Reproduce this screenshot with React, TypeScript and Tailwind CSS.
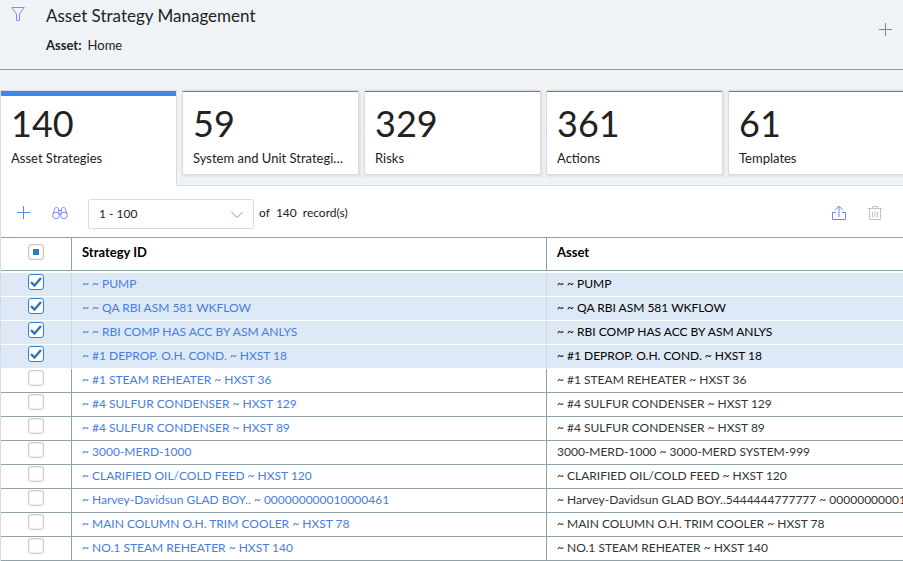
import { useState } from 'react';
import clsx from 'clsx';

type Row = { id: string; asset: string };

const tabs = [
  { count: 140, label: 'Asset Strategies' },
  { count: 59, label: 'System and Unit Strategies' },
  { count: 329, label: 'Risks' },
  { count: 361, label: 'Actions' },
  { count: 61, label: 'Templates' },
];

const rows: Row[] = [
  { id: '~ ~ PUMP', asset: '~ ~ PUMP' },
  { id: '~ ~ QA RBI ASM 581 WKFLOW', asset: '~ ~ QA RBI ASM 581 WKFLOW' },
  { id: '~ ~ RBI COMP HAS ACC BY ASM ANLYS', asset: '~ ~ RBI COMP HAS ACC BY ASM ANLYS' },
  { id: '~ #1 DEPROP. O.H. COND. ~ HXST 18', asset: '~ #1 DEPROP. O.H. COND. ~ HXST 18' },
  { id: '~ #1 STEAM REHEATER ~ HXST 36', asset: '~ #1 STEAM REHEATER ~ HXST 36' },
  { id: '~ #4 SULFUR CONDENSER ~ HXST 129', asset: '~ #4 SULFUR CONDENSER ~ HXST 129' },
  { id: '~ #4 SULFUR CONDENSER ~ HXST 89', asset: '~ #4 SULFUR CONDENSER ~ HXST 89' },
  { id: '~ 3000-MERD-1000', asset: '3000-MERD-1000 ~ 3000-MERD SYSTEM-999' },
  { id: '~ CLARIFIED OIL/COLD FEED ~ HXST 120', asset: '~ CLARIFIED OIL/COLD FEED ~ HXST 120' },
  {
    id: '~ Harvey-Davidsun GLAD BOY.. ~ 000000000010000461',
    asset: '~ Harvey-Davidsun GLAD BOY..5444444777777 ~ 00000000001',
  },
  { id: '~ MAIN COLUMN O.H. TRIM COOLER ~ HXST 78', asset: '~ MAIN COLUMN O.H. TRIM COOLER ~ HXST 78' },
  { id: '~ NO.1 STEAM REHEATER ~ HXST 140', asset: '~ NO.1 STEAM REHEATER ~ HXST 140' },
];

function PlusIcon() {
  return (
    <svg viewBox="0 0 14 14" className="w-3.5 h-3.5" fill="none" stroke="#5b8be8" shapeRendering="crispEdges">
      <path d="M6.5 0v13M0 6.5h13" />
    </svg>
  );
}

function FilterIcon() {
  return (
    <svg viewBox="0 0 14 14" className="w-3.5 h-3.5" fill="none" stroke="#7b8ff0">
      <path d="M.8 .5h12.4L8.500 7v6.500h-3V7z" />
    </svg>
  );
}

function BinocularsIcon() {
  return (
    <svg viewBox="0 0 16 14" className="w-4 h-3.5" fill="none" stroke="#7b8ff0">
      <circle cx="4" cy="9.500" r="3.300" />
      <circle cx="12" cy="9.500" r="3.300" />
      <path d="M1 8 3 2.500C3.300 .8 5.800 .8 6.300 2.500L7 8M15 8 13 2.500C12.700 .8 10.200 .8 9.700 2.500L9 8M6.500 4.500h3M7 8.500h2" />
    </svg>
  );
}

function ShareIcon() {
  return (
    <svg viewBox="0 0 16 16" className="w-4 h-4" fill="none" stroke="#6a86f0">
      <path d="M5 7.500H1.500v7h13v-7H11M8 12V1.500M4 5.200l4-4 4 4" />
    </svg>
  );
}

function TrashIcon() {
  return (
    <svg viewBox="0 0 14 16" className="w-3.5 h-4" fill="none" stroke="#bcc3c9">
      <path d="M0 3.500h14M1.500 3.500v11h11v-11M4.500 3.500v-2h5v2M4.500 7v5.500M7 6v6.500M9.500 7v5.500" />
    </svg>
  );
}

type CheckProps = { label: string; checked: boolean; partial?: boolean; onChange: () => void };

function Check({ label, checked, partial, onChange }: CheckProps) {
  return (
    <span className="relative block w-4 h-4 mx-auto">
      <input
        type="checkbox"
        aria-label={label}
        checked={checked}
        onChange={onChange}
        className={clsx(
          'block w-4 h-4 appearance-none rounded-[3px] border bg-white',
          checked ? 'border-[#337fd0]' : 'border-[#c8c8c8] shadow-[inset_0_0_2px_#d4d4d4]'
        )}
      />
      {checked && (
        <svg viewBox="0 0 16 16" className="absolute inset-0 pointer-events-none" fill="none" stroke="#2f74bd" strokeWidth="2.4">
          <path d="M3 8l3.500 3.500L13 4" />
        </svg>
      )}
      {partial && <span className="absolute inset-[5px] bg-[#337ab7] pointer-events-none" />}
    </span>
  );
}

export default function App() {
  const [activeTab, setActiveTab] = useState(0);
  const [selected, setSelected] = useState<number[]>([0, 1, 2, 3]);

  const toggle = (i: number) =>
    setSelected((s) => (s.includes(i) ? s.filter((n) => n !== i) : [...s, i]));

  const allSelected = selected.length === rows.length;

  return (
    <div className="min-h-screen overflow-hidden bg-[#eff3f6] font-[Lato,sans-serif] text-[13px] text-[#222]">
      <header className="flex items-start h-[70px] pl-[11px] pr-2.5 border-b border-[#8d979d]">
        <button aria-label="Filter" className="mt-[7px]">
          <FilterIcon />
        </button>
        <div className="flex-1 pl-[21px] pt-1.5">
          <h1 className="text-[17px] leading-5">Asset Strategy Management</h1>
          <p className="flex gap-1.5 mt-[9px] leading-5">
            <span className="font-bold">Asset:</span>
            <span>Home</span>
          </p>
        </div>
        <button aria-label="Add" className="mt-[23px]">
          <PlusIcon />
        </button>
      </header>

      <nav className="flex items-start gap-[5px] pt-5">
        {tabs.map((tab, i) => (
          <button
            key={tab.label}
            onClick={() => setActiveTab(i)}
            className={clsx(
              'relative flex flex-col w-[177px] shrink-0 pl-2.5 pr-3.5 text-left bg-white border border-[#d9dbdd]',
              i === activeTab ? 'h-24 -mb-px z-10 border-b-0' : 'h-[85px] shadow-[1px_1px_3px_#d5d9dc]'
            )}
          >
            <span
              className={clsx('absolute top-0 inset-x-0 bg-[#3f87e8]', i === activeTab ? 'h-[5px]' : 'h-px')}
            />
            <span className="mt-3 text-[36px] leading-10">{tab.count}</span>
            <span className="block w-full mt-[5px] leading-5 truncate">{tab.label}</span>
          </button>
        ))}
      </nav>

      <main className="bg-white border-t border-l border-[#d9dbdd] text-xs">
        <div className="flex items-center h-[51px] pl-4 pr-[21px] pt-0.5">
          <button aria-label="New strategy">
            <PlusIcon />
          </button>
          <button aria-label="Search" className="ml-[21px]">
            <BinocularsIcon />
          </button>
          <div className="relative ml-5 mt-0.5">
            <select
              aria-label="Record range"
              className="block w-[166px] h-[30px] pl-2.5 appearance-none bg-white border border-[#d8dde1] rounded-xs"
            >
              <option>1 - 100</option>
            </select>
            <svg viewBox="0 0 12 8" className="absolute right-[11px] top-3 w-3 h-2 pointer-events-none" fill="none" stroke="#6f8ff0">
              <path d="M.5 1 6 6.500 11.500 1" />
            </svg>
          </div>
          <span className="flex gap-1.5 ml-[5px]">
            <span>of</span>
            <span>140</span>
            <span>record(s)</span>
          </span>
          <div className="flex items-center gap-[21px] ml-auto">
            <button aria-label="Share">
              <ShareIcon />
            </button>
            <button aria-label="Delete" disabled>
              <TrashIcon />
            </button>
          </div>
        </div>

        <table className="w-full table-fixed border-separate border-spacing-0 whitespace-nowrap">
          <colgroup>
            <col className="w-[71px]" />
            <col className="w-[475px]" />
            <col />
          </colgroup>
          <thead>
            <tr className="h-[34px] text-left text-[13px] text-black">
              <th className="p-0 pt-1.5 align-top border-t border-r border-b border-[#8fa1ab]">
                <Check
                  label="Select all"
                  checked={allSelected}
                  partial={selected.length > 0 && !allSelected}
                  onChange={() => setSelected(allSelected ? [] : rows.map((_, i) => i))}
                />
              </th>
              <th className="pt-0 pb-0.5 px-2.5 font-bold border-t border-r border-b border-[#8fa1ab]">Strategy ID</th>
              <th className="pt-0 pb-0.5 px-2.5 font-bold border-t border-b border-[#8fa1ab]">Asset</th>
            </tr>
          </thead>
          <tbody className="before:block before:h-0.5">
            {rows.map((row, i) => {
              const on = selected.includes(i);
              const cell = on
                ? 'bg-[#dee9f7] border-b-white border-r-[#d3d7da] text-black'
                : 'border-b-[#8fa1ab] border-r-[#8fa1ab] text-[#333]';
              return (
                <tr key={row.id} className="h-6">
                  <td className={clsx('p-0 pt-px align-top border-b border-r', cell)}>
                    <Check label={`Select ${row.id}`} checked={on} onChange={() => toggle(i)} />
                  </td>
                  <td className={clsx('pt-0 pb-0.5 px-2.5 border-b border-r overflow-hidden', cell)}>
                    <a href="#" className="text-[#477de0]">
                      {row.id}
                    </a>
                  </td>
                  <td className={clsx('pt-0 pb-0.5 pl-2.5 border-b overflow-hidden', cell)}>{row.asset}</td>
                </tr>
              );
            })}
          </tbody>
        </table>
      </main>
    </div>
  );
}
